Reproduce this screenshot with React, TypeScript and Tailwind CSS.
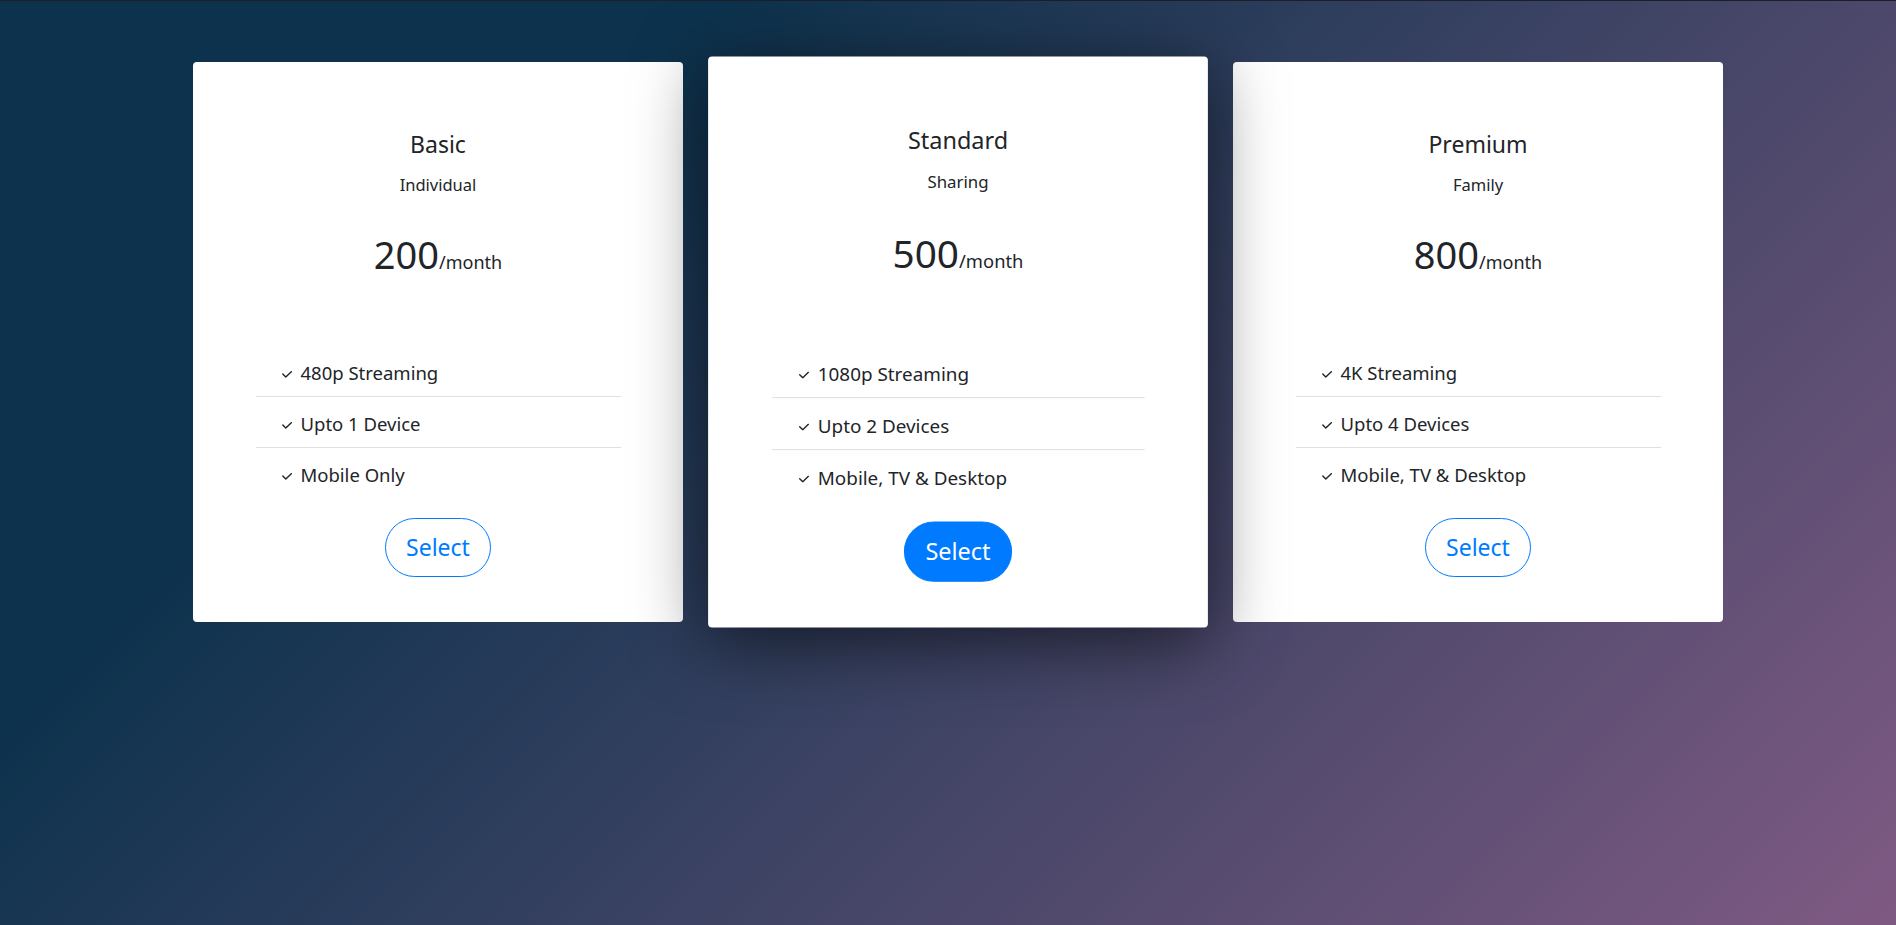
import React from "react";

interface Plan {
    name: string;
    kind: string;
    price: string;
    features: string[];
    featured?: boolean;
}

const plans: Plan[] = [
    { name: "Basic", kind: "Individual", price: "200", features: ["480p Streaming", "Upto 1 Device", "Mobile Only"] },
    { name: "Standard", kind: "Sharing", price: "500", features: ["1080p Streaming", "Upto 2 Devices", "Mobile, TV & Desktop"], featured: true },
    { name: "Premium", kind: "Family", price: "800", features: ["4K Streaming", "Upto 4 Devices", "Mobile, TV & Desktop"] },
];

const Check = () => (
    <svg className="w-[10px] h-[7px] mt-[3px] shrink-0" viewBox="0 0 10 7" fill="none">
        <path d="M0.8 3.1 L3.8 6.1 L9.3 0.7" stroke="#212529" strokeWidth="1.4" strokeLinecap="round" strokeLinejoin="round" />
    </svg>
);

const PlanCard = ({ plan }: { plan: Plan }) => {
    const cardClass = plan.featured
        ? "relative z-10 scale-[1.02] shadow-[0_14px_70px_rgba(0,0,0,0.6)]"
        : "relative z-0";
    return (
        <div className={"w-[490px] bg-white rounded flex flex-col items-center pt-[68px] pb-[45px] " + cardClass}>
            <h4 className="text-[23px] leading-[28px]">{plan.name}</h4>
            <p className="mt-[15px] text-[16.5px] leading-[24px]">{plan.kind}</p>
            <div className="mt-[34px] h-[46px] flex items-baseline">
                <span className="text-[38px] leading-[46px]">{plan.price}</span>
                <span className="text-[18px] leading-[20px]">/month</span>
            </div>
            <ul className="mt-[69px] w-[365px]">
                {plan.features.map((f, i) => (
                    <li
                        key={f}
                        className={
                            "flex items-center gap-[9px] pl-[26px] pt-[13px] pb-[9px] text-[18.5px] leading-[28px] " +
                            (i < plan.features.length - 1 ? "border-b border-[#dfdfdf]" : "")
                        }
                    >
                        <Check />
                        <span>{f}</span>
                    </li>
                ))}
            </ul>
            {plan.featured ? (
                <button className="mt-[20px] h-[59px] px-[20px] rounded-full bg-[#007bff] border border-[#007bff] text-white text-[23px]">
                    Select
                </button>
            ) : (
                <button className="mt-[20px] h-[59px] px-[20px] rounded-full bg-white border border-[#007bff] text-[#007bff] text-[23px]">
                    Select
                </button>
            )}
        </div>
    );
};

export default function App() {
    return (
        <div
            className="min-h-screen border-t border-[#1e1f23] bg-[#7f5a83] bg-[linear-gradient(315deg,#7f5a83_0%,#0d324d_74%)] text-[#212529]"
            style={{ fontFamily: "'Noto Sans', 'Open Sans', sans-serif" }}
        >
            <div className="flex justify-center items-start gap-[30px] pt-[61px] pl-[20px]">
                {plans.map((p) => (
                    <PlanCard key={p.name} plan={p} />
                ))}
            </div>
        </div>
    );
}
